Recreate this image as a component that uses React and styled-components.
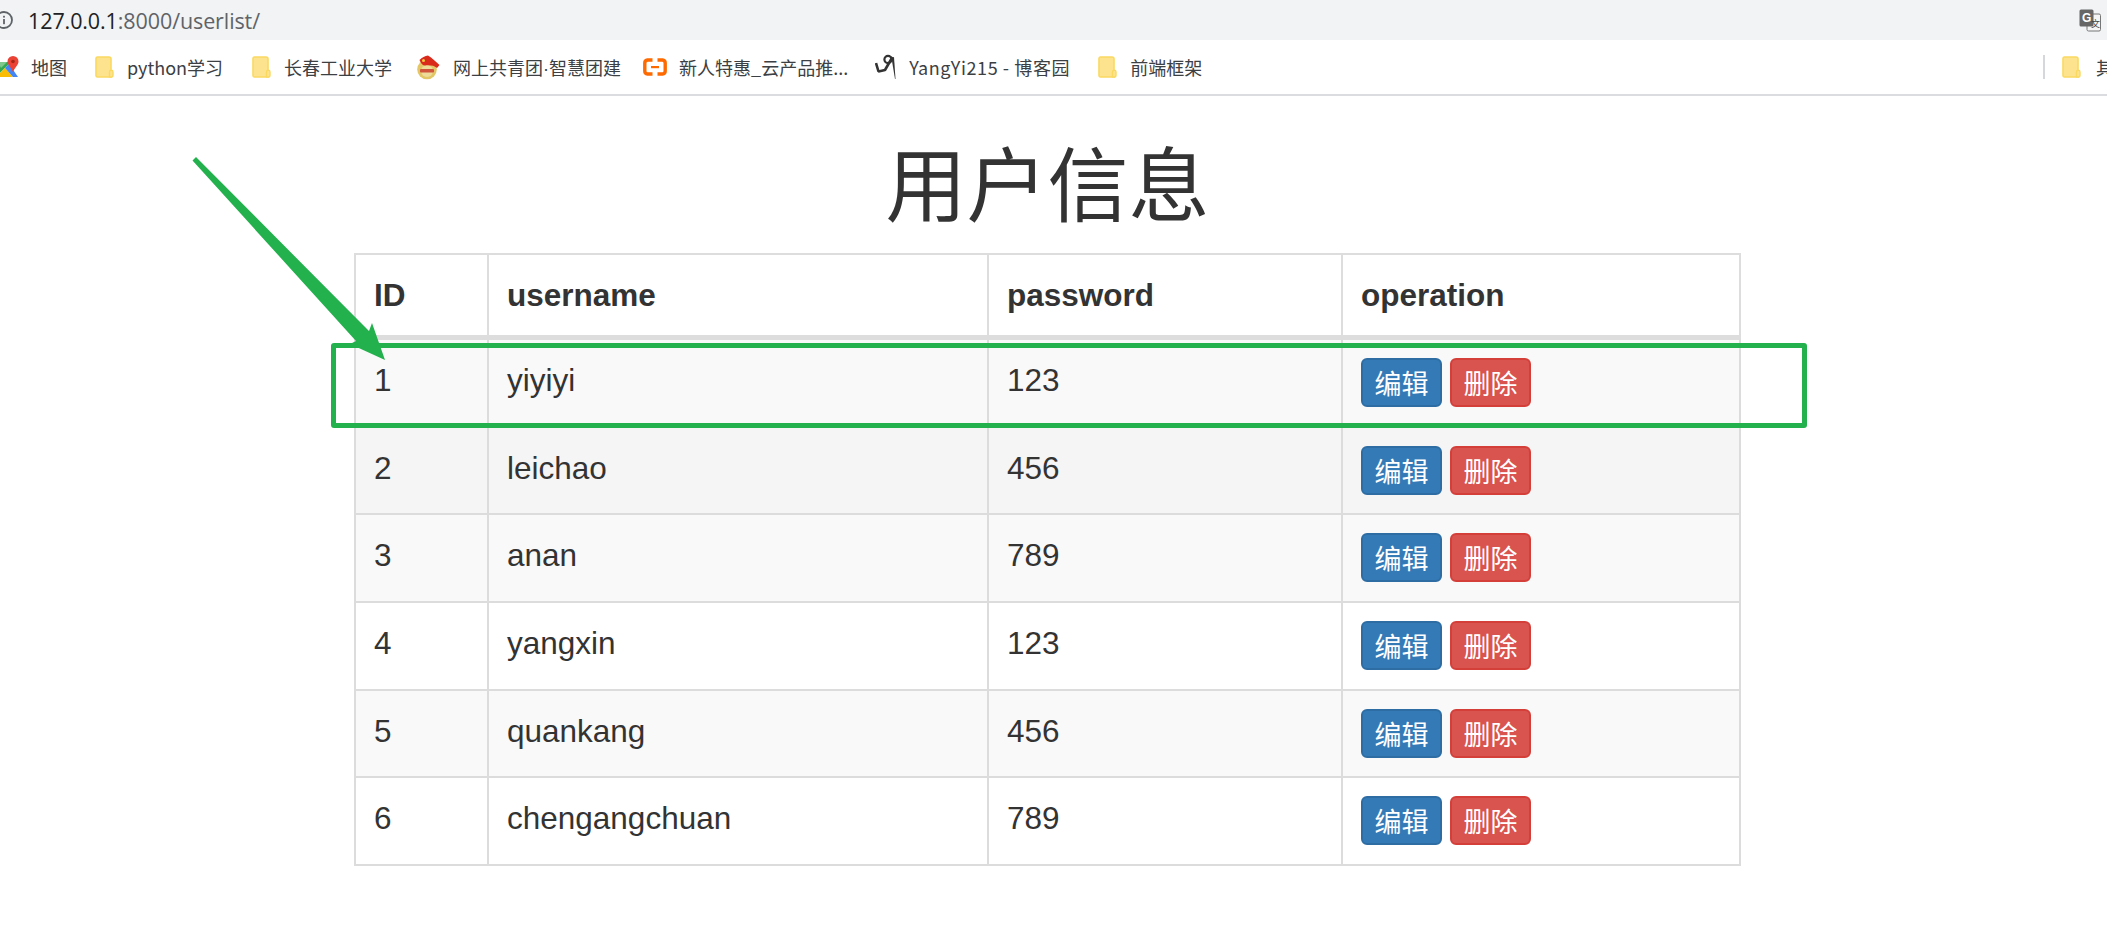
import styled, { createGlobalStyle } from 'styled-components'

const GlobalStyle = createGlobalStyle`
  html, body {
    margin: 0;
    padding: 0;
    background: #fff;
  }
  body {
    font-family: "Liberation Sans", "Noto Sans CJK SC", sans-serif;
    color: #333;
    overflow: hidden;
  }
`

const Page = styled.div`
  position: relative;
  width: 2107px;
  height: 925px;
  overflow: hidden;
`
const AddressBar = styled.div`
  display: flex;
  align-items: center;
  height: 40px;
  background: #f1f3f4;
  padding: 0 6px 0 0;
  box-sizing: border-box;
`
const InfoIcon = styled.svg`
  width: 18px;
  height: 18px;
  margin-left: -5px;
  flex: none;
`
const Url = styled.div`
  margin-left: 15px;
  font-family: "Open Sans", "Noto Sans", sans-serif;
  font-size: 21.5px;
  letter-spacing: -0.1px;
  color: #5f6368;
  flex: 1;
  b {
    font-weight: 400;
    color: #202124;
  }
`
const BookmarkBar = styled.div`
  display: flex;
  align-items: center;
  height: 54px;
  background: #fff;
  border-bottom: 2px solid #dadce0;
  box-sizing: content-box;
  overflow: hidden;
  padding-left: 0;
  font-family: "Noto Sans CJK SC", "Noto Sans", sans-serif;
  font-size: 18px;
  color: #3c4043;
`
const Bookmark = styled.div`
  display: flex;
  align-items: center;
  gap: ${p => p.$gap || 13}px;
  margin-left: ${p => p.$left}px;
  margin-right: ${p => p.$right || 0}px;
  letter-spacing: ${p => p.$spacing || 0}px;
  white-space: nowrap;
  flex: none;
`
const Dot = styled.span`
  font-family: "Liberation Sans", sans-serif;
`
const Divider = styled.div`
  width: 2px;
  height: 24px;
  margin-left: auto;
  background: #d5d7da;
  flex: none;
`
const Main = styled.main`
  width: 1385px;
  margin-left: 354px;
`
const Title = styled.h1`
  margin: 0;
  height: 157px;
  display: flex;
  align-items: center;
  justify-content: center;
  padding: 10px 0 0 2px;
  box-sizing: border-box;
  font-family: "Noto Sans CJK SC", sans-serif;
  font-size: 81px;
  font-weight: 400;
  line-height: 1;
  color: #333;
`
const Table = styled.table`
  width: 1385px;
  table-layout: fixed;
  border-collapse: collapse;
  font-size: 31.5px;
  line-height: 44px;
  color: #333;
`
const HeadCell = styled.th`
  text-align: left;
  font-weight: 700;
  padding: 18px 18px 18px;
  height: 44px;
  border: 2px solid #ddd;
  border-bottom: 5px solid #ddd;
`
const Row = styled.tr`
  background: ${p => p.$bg};
`
const Cell = styled.td`
  padding: 18px 18px 18.67px;
  height: 49px;
  vertical-align: top;
  border: 2px solid #dcdcdc;
`
const Actions = styled.div`
  display: flex;
  gap: 8px;
`
const Button = styled.button`
  width: 81px;
  height: 49px;
  padding: 0;
  box-sizing: border-box;
  border-radius: 6px;
  border: 2px solid ${p => (p.$danger ? '#d43f3a' : '#2e6da4')};
  background: ${p => (p.$danger ? '#d9534f' : '#337ab7')};
  color: #fff;
  font-family: "Noto Sans CJK SC", sans-serif;
  font-size: 27px;
  line-height: 1;
`
const Frame = styled.div`
  position: absolute;
  left: 331px;
  top: 343px;
  width: 1476px;
  height: 85px;
  box-sizing: border-box;
  border: 5px solid #23b14d;
  border-radius: 3px;
  pointer-events: none;
`
const ArrowSvg = styled.svg`
  position: absolute;
  left: 0;
  top: 0;
  pointer-events: none;
`
const TranslateSvg = styled.svg`
  flex: none;
  margin-left: auto;
`

const Folder = () => (
  <svg width="19" height="22" viewBox="0 0 19 22">
    <path d="M1 2.5 A1.5 1.5 0 0 1 2.5 1 H14 A2 2 0 0 1 16 3 V21 H2.5 A1.5 1.5 0 0 1 1 19.5 Z" fill="#fee38f" stroke="#fad961" strokeWidth="1.6" />
    <path d="M14.5 21 V16 A1.5 1.5 0 0 1 18 16 V19.5 A1.5 1.5 0 0 1 16.5 21 Z" fill="#fee38f" stroke="#fad961" strokeWidth="1.4" />
  </svg>
)

const MapsIcon = () => (
  <svg width="22" height="24" viewBox="0 0 22 24">
    <path d="M0 7 H13 L0 20 Z" fill="#34a853" />
    <path d="M0 20 L7 13 L15 22 H2 A2 2 0 0 1 0 20 Z" fill="#fbbc04" />
    <path d="M7 13 L11 9 L20 22 H15 Z" fill="#4285f4" />
    <path d="M0 7 H9 L3 13 Z" fill="#7fc98f" />
    <path d="M15 1 A5.5 5.5 0 0 1 20.5 6.5 C20.5 10 17 12 15 17 C13 12 9.5 10 9.5 6.5 A5.5 5.5 0 0 1 15 1 Z" fill="#ea4335" />
    <circle cx="15" cy="6.5" r="1.8" fill="#a52714" />
  </svg>
)

const LeagueBadge = () => (
  <svg width="23" height="25" viewBox="0 0 23 25">
    <circle cx="10" cy="14.5" r="9.8" fill="#e3c766" />
    <circle cx="10" cy="16" r="6" fill="#eedc9a" />
    <path d="M2.5 5 C5 2.5 8 1 11 0.5 C15 3 19 7 22.5 10 L20 13 C17 10.5 13 10 8 10.5 C6 10.5 4 9 2.5 5 Z" fill="#d92a1c" />
    <rect x="3" y="14" width="14" height="3.5" rx="1" fill="#d0553a" />
    <circle cx="6.5" cy="5.5" r="1.5" fill="#f0c93c" />
  </svg>
)

const AliIcon = () => (
  <svg width="24" height="18" viewBox="0 0 24 18">
    <path d="M9.5 2 H4.5 A3 3 0 0 0 1.8 5 V13 A3 3 0 0 0 4.5 16 H9.5 M14.5 2 H19.5 A3 3 0 0 1 22.2 5 V13 A3 3 0 0 1 19.5 16 H14.5" fill="none" stroke="#ff6a00" strokeWidth="3.4" />
    <rect x="8" y="8" width="8" height="2.2" fill="#ff6a00" />
  </svg>
)

const BlogIcon = () => (
  <svg width="24" height="26" viewBox="0 0 24 26">
    <circle cx="13" cy="5.5" r="3.6" fill="none" stroke="#333" strokeWidth="2.2" />
    <path d="M1 9 L3.5 17.5 L10 16 L17.5 3" fill="none" stroke="#333" strokeWidth="2.6" strokeLinejoin="bevel" />
    <path d="M16.5 4 L19 3 L20.5 25 L20 25 Z" fill="#333" />
  </svg>
)

const TranslateIcon = () => (
  <TranslateSvg width="22" height="23" viewBox="0 0 22 23">
    <rect x="8" y="5" width="13.5" height="17" rx="1.5" fill="#f5f5f5" stroke="#777" />
    <rect x="0.5" y="0.5" width="14" height="17" rx="1.5" fill="#666" />
    <text x="3" y="13" fontSize="12" fontWeight="700" fill="#fff" fontFamily="Liberation Sans, sans-serif">G</text>
    <text x="12" y="18" fontSize="9" fill="#444" fontFamily="Noto Sans CJK SC, sans-serif">文</text>
  </TranslateSvg>
)

const users = [
  { id: 1, name: 'yiyiyi', pwd: '123', bg: '#f9f9f9' },
  { id: 2, name: 'leichao', pwd: '456', bg: '#f5f5f5' },
  { id: 3, name: 'anan', pwd: '789', bg: '#f9f9f9' },
  { id: 4, name: 'yangxin', pwd: '123', bg: '#fff' },
  { id: 5, name: 'quankang', pwd: '456', bg: '#f9f9f9' },
  { id: 6, name: 'chengangchuan', pwd: '789', bg: '#fff' },
]

export default function App() {
  return (
    <Page>
      <GlobalStyle />
      <AddressBar>
        <InfoIcon viewBox="0 0 18 18">
          <circle cx="9" cy="9" r="8" fill="none" stroke="#5f6368" strokeWidth="1.8" />
          <rect x="8.1" y="8" width="1.8" height="5.2" fill="#5f6368" />
          <rect x="8.1" y="4.8" width="1.8" height="1.8" fill="#5f6368" />
        </InfoIcon>
        <Url><b>127.0.0.1</b>:8000/userlist/</Url>
        <TranslateIcon />
      </AddressBar>
      <BookmarkBar>
        <Bookmark $left={-2} $gap={11}><MapsIcon />地图</Bookmark>
        <Bookmark $left={28}><Folder />python学习</Bookmark>
        <Bookmark $left={29}><Folder />长春工业大学</Bookmark>
        <Bookmark $left={25}><LeagueBadge /><span>网上共青团<Dot>·</Dot>智慧团建</span></Bookmark>
        <Bookmark $left={22} $gap={12}><AliIcon />新人特惠_云产品推...</Bookmark>
        <Bookmark $left={27} $gap={10} $spacing={0.6}><BlogIcon />YangYi215 - 博客园</Bookmark>
        <Bookmark $left={28}><Folder />前端框架</Bookmark>
        <Divider />
        <Bookmark $left={17} $right={-25} $gap={15}><Folder />其他</Bookmark>
      </BookmarkBar>
      <Main>
        <Title>用户信息</Title>
        <Table>
          <colgroup>
            <col style={{ width: 133 }} />
            <col style={{ width: 500 }} />
            <col style={{ width: 354 }} />
            <col style={{ width: 398 }} />
          </colgroup>
          <thead>
            <tr>
              <HeadCell>ID</HeadCell>
              <HeadCell>username</HeadCell>
              <HeadCell>password</HeadCell>
              <HeadCell>operation</HeadCell>
            </tr>
          </thead>
          <tbody>
            {users.map(u => (
              <Row key={u.id} $bg={u.bg}>
                <Cell>{u.id}</Cell>
                <Cell>{u.name}</Cell>
                <Cell>{u.pwd}</Cell>
                <Cell>
                  <Actions>
                    <Button>编辑</Button>
                    <Button $danger>删除</Button>
                  </Actions>
                </Cell>
              </Row>
            ))}
          </tbody>
        </Table>
      </Main>
      <Frame />
      <ArrowSvg width="400" height="370" viewBox="0 0 400 370">
        <polygon points="192.5,160.5 196,157 369,331 372,323 385,360 350,344 356,341" fill="#23b14d" />
      </ArrowSvg>
    </Page>
  )
}
